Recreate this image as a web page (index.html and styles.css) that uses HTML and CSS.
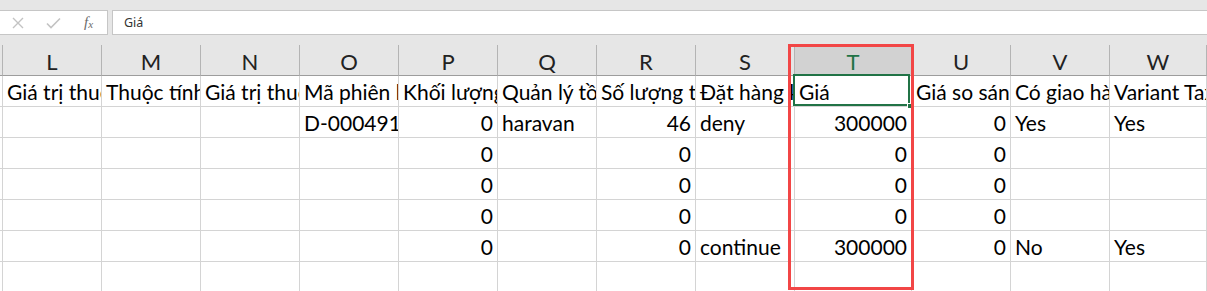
FILE: index.html
```html
<!DOCTYPE html>
<html lang="vi">
<head>
<meta charset="utf-8">
<title>Sheet</title>
<link rel="stylesheet" href="styles.css">
</head>
<body>
<div class="app">
  <div class="toolbar">
    <div class="fx-box">
      <svg class="ico" width="12" height="12" viewBox="0 0 12 12"><path d="M1 1 L11 11 M11 1 L1 11" stroke="#c3c3c3" stroke-width="1.4" fill="none"/></svg>
      <svg class="ico" width="15" height="12" viewBox="0 0 15 12"><path d="M1 6.5 L5 10.5 L14 1.5" stroke="#c3c3c3" stroke-width="1.6" fill="none"/></svg>
      <span class="fx">f<sub>x</sub></span>
    </div>
    <div class="formula">Giá</div>
  </div>
  <div class="sheet">
    <div class="grid">
      <div class="h k"></div>
      <div class="h">L</div><div class="h">M</div><div class="h">N</div><div class="h">O</div>
      <div class="h">P</div><div class="h">Q</div><div class="h">R</div><div class="h">S</div>
      <div class="h hs">T</div><div class="h">U</div><div class="h">V</div><div class="h">W</div>

      <div class="c k"></div>
      <div class="c">Giá trị thuộc tính 2</div>
      <div class="c">Thuộc tính 3</div>
      <div class="c">Giá trị thuộc tính 3</div>
      <div class="c">Mã phiên bản sản phẩm</div>
      <div class="c">Khối lượng</div>
      <div class="c">Quản lý tồn kho</div>
      <div class="c">Số lượng tồn kho</div>
      <div class="c">Đặt hàng khi hết hàng</div>
      <div class="c sel">Giá<span class="handle"></span></div>
      <div class="c">Giá so sánh</div>
      <div class="c">Có giao hàng không?</div>
      <div class="c">Variant Taxable</div>

      <div class="c k"></div>
      <div class="c"></div><div class="c"></div><div class="c"></div>
      <div class="c">D-000491</div>
      <div class="c n">0</div>
      <div class="c">haravan</div>
      <div class="c n">46</div>
      <div class="c">deny</div>
      <div class="c n">300000</div>
      <div class="c n">0</div>
      <div class="c">Yes</div>
      <div class="c">Yes</div>

      <div class="c k"></div>
      <div class="c"></div><div class="c"></div><div class="c"></div><div class="c"></div>
      <div class="c n">0</div><div class="c"></div><div class="c n">0</div><div class="c"></div>
      <div class="c n">0</div><div class="c n">0</div><div class="c"></div><div class="c"></div>

      <div class="c k"></div>
      <div class="c"></div><div class="c"></div><div class="c"></div><div class="c"></div>
      <div class="c n">0</div><div class="c"></div><div class="c n">0</div><div class="c"></div>
      <div class="c n">0</div><div class="c n">0</div><div class="c"></div><div class="c"></div>

      <div class="c k"></div>
      <div class="c"></div><div class="c"></div><div class="c"></div><div class="c"></div>
      <div class="c n">0</div><div class="c"></div><div class="c n">0</div><div class="c"></div>
      <div class="c n">0</div><div class="c n">0</div><div class="c"></div><div class="c"></div>

      <div class="c k"></div>
      <div class="c"></div><div class="c"></div><div class="c"></div><div class="c"></div>
      <div class="c n">0</div><div class="c"></div><div class="c n">0</div>
      <div class="c">continue</div>
      <div class="c n">300000</div><div class="c n">0</div>
      <div class="c">No</div>
      <div class="c">Yes</div>

      <div class="c k"></div>
      <div class="c"></div><div class="c"></div><div class="c"></div><div class="c"></div>
      <div class="c"></div><div class="c"></div><div class="c"></div><div class="c"></div>
      <div class="c"></div><div class="c"></div><div class="c"></div><div class="c"></div>
    </div>
    <div class="annot"></div>
  </div>
</div>
</body>
</html>
```

FILE: styles.css
```css
* { box-sizing: border-box; }
html, body { margin: 0; padding: 0; background: #fff; overflow: hidden; }
.app { width: 1207px; height: 291px; overflow: hidden; font-family: Lato, "Noto Sans", sans-serif; }

.toolbar {
  height: 45px;
  background: #e6e6e6;
  display: flex;
  gap: 4px;
  padding-top: 10px;
  padding-bottom: 10px;
}
.fx-box {
  width: 108px;
  height: 25px;
  background: #fff;
  border: 1px solid #c6c6c6;
  border-left: none;
  display: flex;
  align-items: center;
  padding-left: 12px;
}
.ico { display: block; }
.ico:first-child { margin-right: 22px; }
.fx {
  margin-left: 23px;
  font-family: "Liberation Serif", serif;
  font-style: italic;
  font-size: 15px;
  color: #6b6b6b;
  line-height: 1;
}
.fx sub { font-size: 11px; vertical-align: -1px; }
.formula {
  flex: 1;
  height: 25px;
  background: #fff;
  border: 1px solid #c6c6c6;
  border-right: none;
  font-family: "Noto Sans", sans-serif;
  font-size: 12.5px;
  color: #333;
  padding-left: 11px;
  display: flex;
  align-items: center;
}

.sheet { position: relative; }
.grid {
  display: grid;
  grid-template-columns: 3px repeat(8, 99px) 117px 99px 99px 97px;
  grid-template-rows: 31px repeat(7, 31px);
}
.h {
  background: #e6e6e6;
  border-right: 1px solid #b4b4b4;
  border-bottom: 1px solid #9d9d9d;
  display: flex;
  align-items: center;
  justify-content: center;
  padding-top: 3px;
  font-size: 22px;
  color: #222;
}
.h.hs { background: #d2d2d2; color: #217346; }
.c {
  border-right: 1px solid #d4d4d4;
  border-bottom: 1px solid #d4d4d4;
  overflow: hidden;
  white-space: nowrap;
  display: flex;
  align-items: flex-end;
  padding: 0 4px 2px 4px;
  font-size: 21px;
  color: #000;
}
.k { padding: 0; }
.c.n { justify-content: flex-end; }
.c.sel { position: relative; overflow: visible; }
.c.sel::after {
  content: "";
  position: absolute;
  left: -2px;
  top: -2px;
  right: 1px;
  bottom: 0;
  border: 2px solid #217346;
}
.handle {
  position: absolute;
  right: -2px;
  bottom: -3px;
  width: 6px;
  height: 6px;
  background: #217346;
  border: 1px solid #fff;
  z-index: 2;
}
.annot {
  position: absolute;
  left: 788px;
  top: -1px;
  width: 126px;
  height: 246px;
  border: 3px solid #f24646;
  z-index: 3;
}
```
